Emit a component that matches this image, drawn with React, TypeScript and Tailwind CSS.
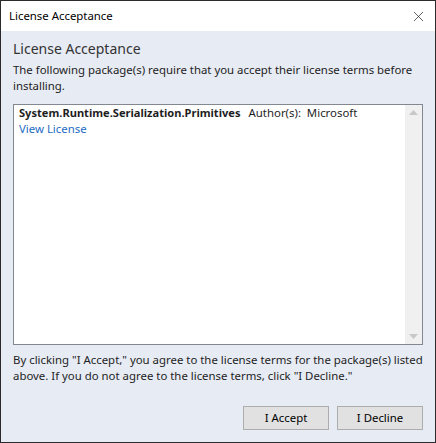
import { X } from "lucide-react";

const font = { fontFamily: '"Segoe UI", "Noto Sans", sans-serif' };

export default function App() {
  return (
    <div
      className="w-[436px] h-[443px] border border-[#2b2b2b] bg-[#e7ebf4] flex flex-col text-[11.4px] text-[#1e1e1e]"
      style={font}
    >
      {/* Title bar */}
      <div className="h-[30px] bg-white flex items-center justify-between pl-[8px] pr-[8px] shrink-0">
        <span className="text-[11.4px] text-black">License Acceptance</span>
        <X className="w-[17px] h-[17px] text-[#222]" strokeWidth={1} />
      </div>

      {/* Body */}
      <div className="flex-1 flex flex-col px-[12px] pt-[8px] pb-[12px]">
        <h1 className="text-[14px] leading-[20px] text-[#333]">License Acceptance</h1>
        <p className="mt-[3px] leading-[16px]">
          The following package(s) require that you accept their license terms before installing.
        </p>

        {/* Package list */}
        <div className="mt-[10px] h-[241px] border border-[#828790] bg-white flex">
          <div className="flex-1 pl-[5px]">
            <div className="leading-[16px]">
              <span className="font-bold text-[11.1px]">System.Runtime.Serialization.Primitives</span>
              <span className="ml-[8px]">Author(s):&nbsp; Microsoft</span>
            </div>
            <a className="leading-[16px] text-[#1c6cc4] block">View License</a>
          </div>
          <div className="w-[17px] bg-[#f0f0f0] flex flex-col items-center justify-between py-[5px]">
            <svg width="9" height="5" viewBox="0 0 9 5">
              <path d="M0 5 L4.5 0 L9 5 Z" fill="#c8c8c8" />
            </svg>
            <svg width="9" height="5" viewBox="0 0 9 5">
              <path d="M0 0 L4.5 5 L9 0 Z" fill="#c8c8c8" />
            </svg>
          </div>
        </div>

        <p className="mt-[7px] leading-[16px]">
          By clicking "I Accept," you agree to the license terms for the package(s) listed above. If you do not agree to the license terms, click "I Decline."
        </p>

        <div className="mt-auto flex justify-end gap-[8px]">
          <button className="w-[86px] h-[24px] bg-[#e1e1e1] border border-[#adadad] text-[11.4px] text-black">
            I Accept
          </button>
          <button className="w-[86px] h-[24px] bg-[#e1e1e1] border border-[#adadad] text-[11.4px] text-black">
            I Decline
          </button>
        </div>
      </div>
    </div>
  );
}
